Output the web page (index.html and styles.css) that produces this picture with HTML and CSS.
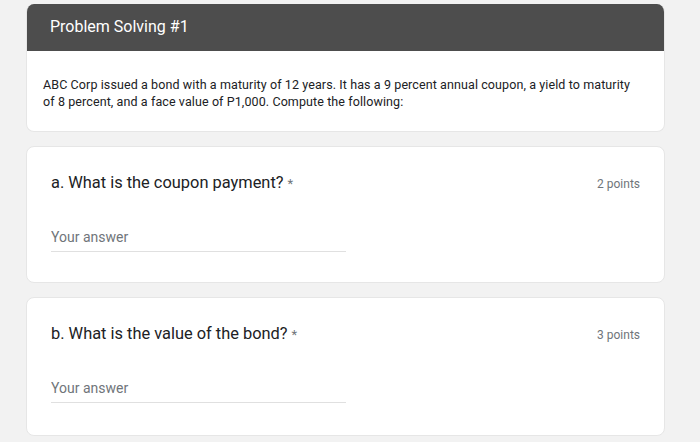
FILE: index.html
```html
<!DOCTYPE html>
<html lang="en">
<head>
  <meta charset="UTF-8">
  <meta name="viewport" content="width=device-width, initial-scale=1.0">
  <title>Problem Solving #1</title>
  <link rel="stylesheet" href="styles.css">
</head>
<body>

  <div class="form">

    <!-- Section header -->
    <div class="card section">
      <div class="section-title">Problem Solving #1</div>
      <div class="section-desc">
        ABC Corp issued a bond with a maturity of 12 years. It has a 9 percent annual coupon, a yield to maturity
        of 8 percent, and a face value of P1,000. Compute the following:
      </div>
    </div>

    <!-- Questions -->
    <div class="card question">
      <div class="question-head">
        <span class="question-title">a. What is the coupon payment? <span class="required">*</span></span>
        <span class="points">2 points</span>
      </div>
      <input class="answer" type="text" placeholder="Your answer">
    </div>

    <div class="card question">
      <div class="question-head">
        <span class="question-title">b. What is the value of the bond? <span class="required">*</span></span>
        <span class="points">3 points</span>
      </div>
      <input class="answer" type="text" placeholder="Your answer">
    </div>

  </div>

</body>
</html>
```

FILE: styles.css
```css
body {
  margin: 0;
  background-color: #f2f2f2;
  font-family: Roboto, "Liberation Sans", Arial, sans-serif;
  color: #202124;
}

.form {
  width: 639px;
  margin-left: 26px;
  padding-top: 4px;
  display: flex;
  flex-direction: column;
  gap: 14px;
}

.card {
  background-color: #fff;
  border-radius: 8px;
  border: 1px solid #e6e6e6;
  box-sizing: border-box;
  overflow: hidden;
}

.section {
  height: 128px;
  border-top: none;
}

.section-title {
  background-color: #4d4d4d;
  color: #fff;
  height: 47px;
  padding-left: 23px;
  font-size: 16px;
  line-height: 46px;
}

.section-desc {
  padding: 25px 27px 0 16px;
  font-size: 12.5px;
  line-height: 17px;
  letter-spacing: 0.1px;
}

.question {
  height: 137px;
  padding: 24px 24px 0 24px;
}

.question:last-child {
  height: 139px;
}

.question-head {
  display: flex;
  justify-content: space-between;
  align-items: center;
}

.question-title {
  font-size: 16.4px;
  line-height: 24px;
}

.required {
  color: #70757a;
  font-size: 13px;
}

.points {
  font-size: 12px;
  color: #70757a;
}

.answer {
  display: block;
  margin-top: 31px;
  width: 295px;
  border: none;
  border-bottom: 1px solid #e0e0e0;
  padding: 0 0 4px 0;
  font-family: inherit;
  font-size: 14px;
  line-height: 20px;
  outline: none;
  background: transparent;
}

.answer::placeholder {
  color: #70757a;
}
```
